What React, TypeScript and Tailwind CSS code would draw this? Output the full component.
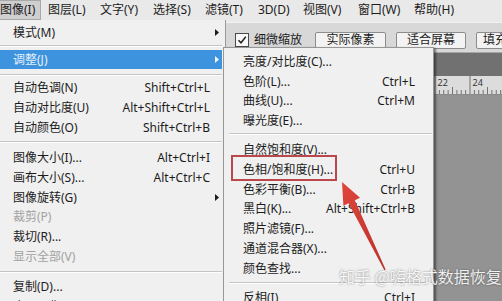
import React from 'react';

type Row =
    | { kind: 'item'; label: string; keys?: string; sub?: boolean; off?: boolean; on?: boolean }
    | { kind: 'sep'; cls: string };

const font = "font-['Noto_Sans','Noto_Sans_CJK_SC',sans-serif]";

const imageMenu: Row[] = [
    { kind: 'item', label: '模式(M)', sub: true },
    { kind: 'sep', cls: 'h-[7px] pt-[2px]' },
    { kind: 'item', label: '调整(J)', sub: true, on: true },
    { kind: 'sep', cls: 'h-[9px] pt-[5px]' },
    { kind: 'item', label: '自动色调(N)', keys: 'Shift+Ctrl+L' },
    { kind: 'item', label: '自动对比度(U)', keys: 'Alt+Shift+Ctrl+L' },
    { kind: 'item', label: '自动颜色(O)', keys: 'Shift+Ctrl+B' },
    { kind: 'sep', cls: 'h-[11px] pt-[4px]' },
    { kind: 'item', label: '图像大小(I)...', keys: 'Alt+Ctrl+I' },
    { kind: 'item', label: '画布大小(S)...', keys: 'Alt+Ctrl+C' },
    { kind: 'item', label: '图像旋转(G)', sub: true },
    { kind: 'item', label: '裁剪(P)', off: true },
    { kind: 'item', label: '裁切(R)...' },
    { kind: 'item', label: '显示全部(V)', off: true },
    { kind: 'sep', cls: 'h-[11px] pt-[4px]' },
    { kind: 'item', label: '复制(D)...' },
    { kind: 'item', label: '应用图像(Y)...' }
];

const adjustMenu: Row[] = [
    { kind: 'item', label: '亮度/对比度(C)...' },
    { kind: 'item', label: '色阶(L)...', keys: 'Ctrl+L' },
    { kind: 'item', label: '曲线(U)...', keys: 'Ctrl+M' },
    { kind: 'item', label: '曝光度(E)...' },
    { kind: 'sep', cls: 'h-[9px] pt-[2px]' },
    { kind: 'item', label: '自然饱和度(V)...' },
    { kind: 'item', label: '色相/饱和度(H)...', keys: 'Ctrl+U' },
    { kind: 'item', label: '色彩平衡(B)...', keys: 'Ctrl+B' },
    { kind: 'item', label: '黑白(K)...', keys: 'Alt+Shift+Ctrl+B' },
    { kind: 'item', label: '照片滤镜(F)...' },
    { kind: 'item', label: '通道混合器(X)...' },
    { kind: 'item', label: '颜色查找...' },
    { kind: 'sep', cls: 'h-[9px] pt-[3px]' },
    { kind: 'item', label: '反相(I)', keys: 'Ctrl+I' }
];

const topMenus = [
    { label: '图层(L)', w: 'w-[52px]' },
    { label: '文字(Y)', w: 'w-[53px]' },
    { label: '选择(S)', w: 'w-[52px]' },
    { label: '滤镜(T)', w: 'w-[53px]' },
    { label: '3D(D)', w: 'w-[45px]' },
    { label: '视图(V)', w: 'w-[55px]' },
    { label: '窗口(W)', w: 'w-[56px]' },
    { label: '帮助(H)', w: 'w-[50px]' }
];

const Tri = ({ color }: { color: string }) => (
    <svg width="4" height="7" viewBox="0 0 4 7">
        <path d="M0 0L4 3.5L0 7Z" fill={color} />
    </svg>
);

const Separator = ({ cls, inset }: { cls: string; inset: string }) => (
    <div className={`${cls} ${inset}`}>
        <div className="border-t border-[#c4c4c4] border-b border-b-white" />
    </div>
);

const Ruler = () => {
    const step = 35 / 8;
    const ticks = Array.from({ length: 116 }, (_, i) => i);
    return (
        <div className="h-[19px] shrink-0 bg-[#dcdcdc] border-b border-[#8a8a8a]">
            <svg width="502" height="18" viewBox="0 0 502 18">
                {ticks.map((i) => {
                    const x = 435 - step * 96 + i * step;
                    const h = i % 8 === 0 ? 18 : i % 4 === 0 ? 7 : 4;
                    return <line key={i} x1={x} x2={x} y1={18 - h} y2={18} stroke="#555" strokeWidth="0.8" />;
                })}
                <text x="437.5" y="9.5" fontSize="9" fill="#333" fontFamily="Noto Sans">22</text>
                <text x="472.5" y="9.5" fontSize="9" fill="#333" fontFamily="Noto Sans">24</text>
            </svg>
        </div>
    );
};

const App: React.FC = () => {
    return (
        <div className={`relative w-[502px] h-[301px] overflow-hidden bg-[#939393] flex flex-col text-[12px] text-[#1c1c1c] ${font}`}>
            {/* menu bar */}
            <div className="h-[22px] bg-[#e9e9e9] flex items-start shrink-0 whitespace-nowrap">
                <span className="h-[20px] w-[41px] shrink-0 bg-[#cfcfcf] border border-[#a8a8a8] border-l-0 flex items-center leading-none">
                    图像(I)
                </span>
                <div className="w-[7px] shrink-0" />
                {topMenus.map((m) => (
                    <span key={m.label} className={`${m.w} shrink-0 h-[20px] flex items-center leading-none`}>
                        {m.label}
                    </span>
                ))}
            </div>

            {/* options bar */}
            <div className="h-[31px] shrink-0 overflow-hidden whitespace-nowrap bg-[#d8d8d8] border-t border-[#f2f2f2] border-b border-b-[#a6a6a6] flex items-center pt-[5px] pl-[235px]">
                <span className="w-[14px] h-[14px] shrink-0 border border-[#4a4a4a] bg-[#f8f8f8] flex items-center justify-center">
                    <svg width="10" height="10" viewBox="0 0 10 10">
                        <path d="M1.5 5.2L4 7.8L8.8 1.8" stroke="#222" strokeWidth="1.5" fill="none" />
                    </svg>
                </span>
                <span className="ml-[5px] shrink-0 leading-none">细微缩放</span>
                <span className="ml-[13px] w-[71px] h-[17px] shrink-0 border border-[#8c8c8c] rounded-[2px] bg-[#f3f3f3] flex items-center justify-center leading-none">
                    实际像素
                </span>
                <span className="ml-[10px] w-[70px] h-[17px] shrink-0 border border-[#8c8c8c] rounded-[2px] bg-[#f3f3f3] flex items-center justify-center leading-none">
                    适合屏幕
                </span>
                <span className="ml-[10px] w-[70px] h-[17px] shrink-0 border border-[#8c8c8c] rounded-[2px] bg-[#f3f3f3] flex items-center pl-[6px] leading-none">
                    填充屏幕
                </span>
            </div>

            {/* document tab strip */}
            <div className="h-[23px] shrink-0 bg-[#717171]" />
            <Ruler />
            <div className="flex-1 bg-[#939393]" />

            {/* 图像 menu */}
            <div className="absolute left-0 top-[20px] w-[226px] h-[290px] bg-[#f0f0f0] border-r border-[#9b9b9b] pt-[3px] whitespace-nowrap">
                {imageMenu.map((r, idx) =>
                    r.kind === 'sep' ? (
                        <Separator key={idx} cls={r.cls} inset="mr-[3px]" />
                    ) : (
                        <div
                            key={idx}
                            className={`h-[19.7px] mr-[3px] pl-[13px] pr-[3px] flex items-center leading-none ${
                                r.on ? 'bg-[#3d93dd] text-[#e6f0fa]' : r.off ? 'text-[#a2a2a2]' : ''
                            }`}
                        >
                            <span className="flex-1">{r.label}</span>
                            <span>{r.keys}</span>
                            <span className="w-[9px] flex justify-end">{r.sub && <Tri color={r.on ? '#eef5fc' : '#1c1c1c'} />}</span>
                        </div>
                    )
                )}
            </div>

            {/* 调整 submenu */}
            <div className="absolute left-[223px] top-[47px] w-[211px] h-[260px] bg-[#f0f0f0] border border-[#979797] pt-[4px] whitespace-nowrap shadow-[2px_1px_2px_rgba(0,0,0,0.45)]">
                {adjustMenu.map((r, idx) =>
                    r.kind === 'sep' ? (
                        <Separator key={idx} cls={r.cls} inset="ml-[5px] mr-[1px]" />
                    ) : (
                        <div key={idx} className="h-[19.8px] pl-[19px] pr-[18px] flex items-center leading-none">
                            <span className="flex-1">{r.label}</span>
                            <span>{r.keys}</span>
                        </div>
                    )
                )}
            </div>

            {/* red highlight box */}
            <div className="absolute left-[231px] top-[155px] w-[106px] h-[26px] border-2 border-[#b9474b]" />

            {/* red arrow */}
            <svg className="absolute left-0 top-0 pointer-events-none" width="502" height="301" viewBox="0 0 502 301">
                <defs>
                    <linearGradient id="arr" x1="0" y1="0" x2="1" y2="1">
                        <stop offset="0" stopColor="#e0453c" />
                        <stop offset="1" stopColor="#b8312b" />
                    </linearGradient>
                </defs>
                <polygon
                    points="342,182 360,197.8 354.8,200.3 385.6,269.6 384.4,270.2 348.6,203.3 343.4,205.8"
                    fill="url(#arr)"
                />
            </svg>

            {/* watermark */}
            <div className="absolute left-[339px] top-[268px] text-[16px] leading-none text-white/90 [text-shadow:0_0_2px_rgba(0,0,0,0.5)] font-['Noto_Sans_CJK_SC',sans-serif]">
                知乎 @嗨格式数据恢复
            </div>
        </div>
    );
};

export default App;
